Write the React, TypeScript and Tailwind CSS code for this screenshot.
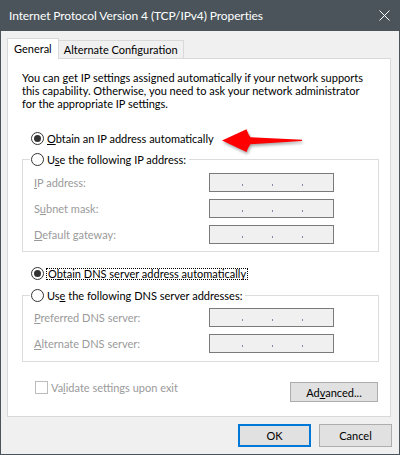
import React from "react"

function Radio({ checked }: { checked?: boolean }) {
  return (
    <span className="flex h-[13px] w-[13px] shrink-0 items-center justify-center rounded-full border border-[#333333] bg-white">
      {checked && <span className="h-[7px] w-[7px] rounded-full bg-[#333333]" />}
    </span>
  )
}

function IpBox() {
  return (
    <div className="flex h-[19px] w-[125px] items-end gap-[29px] border border-[#7a7a7a] bg-[#f0f0f0] pb-[5px] pl-[32px]">
      <span className="h-[2px] w-px bg-[#8a84a8]" />
      <span className="h-[2px] w-px bg-[#8a84a8]" />
      <span className="h-[2px] w-px bg-[#8a84a8]" />
    </div>
  )
}

function Field({ label }: { label: React.ReactNode }) {
  return (
    <div className="flex h-[19px] items-center">
      <span className="w-[175px] text-[#9a9a9a]">{label}</span>
      <IpBox />
    </div>
  )
}

export default function App() {
  return (
    <div className="flex h-[455px] w-[400px] flex-col bg-[#4a545a] font-['Lato',sans-serif] text-[11px] leading-[13px] text-black">
      {/* title bar */}
      <div className="flex h-[31px] shrink-0 items-center justify-between pl-[9px] pr-[10px] text-white">
        <span className="text-[12px] tracking-[-0.1px]">Internet Protocol Version 4 (TCP/IPv4) Properties</span>
        <svg width="11" height="11" viewBox="0 0 11 11" className="mb-px">
          <path d="M0.5 0.5 L10.5 10.5 M10.5 0.5 L0.5 10.5" stroke="#ffffff" strokeWidth="1" />
        </svg>
      </div>

      <div className="mx-px mb-px flex flex-1 flex-col bg-[#f0f0f0] pl-[6px] pt-[7px]">
        {/* tabs */}
        <div className="flex h-[20px] items-end">
          <div className="relative z-10 -mb-px flex h-[21px] items-center border-x border-t border-[#d9d9d9] bg-white px-[6px] pb-px">
            General
          </div>
          <div className="flex h-[18px] items-center border-r border-t border-[#d9d9d9] px-[5px]">
            Alternate Configuration
          </div>
        </div>

        {/* panel */}
        <div className="relative flex h-[359px] w-[384px] flex-col border border-[#d9d9d9] bg-white">
          <p className="ml-[14px] mt-[12px] whitespace-nowrap">
            You can get IP settings assigned automatically if your network supports
            <br />
            this capability. Otherwise, you need to ask your network administrator
            <br />
            for the appropriate IP settings.
          </p>

          <div className="ml-[23px] mt-[21px] flex h-[15px] items-center gap-[3px]">
            <Radio checked />
            <span>
              <u>O</u>btain an IP address automatically
            </span>
          </div>

          <svg
            width="90"
            height="34"
            viewBox="0 0 90 34"
            className="absolute left-[210px] top-[65px] drop-shadow-[1px_2px_1.5px_rgba(0,0,0,0.35)]"
          >
            <path
              d="M4 16.5 L28.5 5.3 Q30 10 32.5 13.2 L84 15.8 L84 17 L32.5 20.2 Q30 23.5 28.5 28 Z"
              fill="#ff0000"
            />
          </svg>

          <fieldset className="ml-[14px] mt-[6px] w-[357px] border border-[#dcdcdc] pb-[7px]">
            <legend className="ml-[7px] pl-px pr-[3px]">
              <div className="flex h-[15px] items-center gap-[3px]">
                <Radio />
                <span>
                  U<u>s</u>e the following IP address:
                </span>
              </div>
            </legend>
            <div className="flex flex-col gap-[7px] pl-[11px] pt-[6px]">
              <Field label={<><u>I</u>P address:</>} />
              <Field label={<>S<u>u</u>bnet mask:</>} />
              <Field label={<><u>D</u>efault gateway:</>} />
            </div>
          </fieldset>

          <div className="ml-[23px] mt-[14px] flex h-[15px] items-center gap-[2px]">
            <Radio checked />
            <span className="border border-dotted border-black px-px leading-[10px]">
              O<u>b</u>tain DNS server address automatically
            </span>
          </div>

          <fieldset className="ml-[14px] mt-[7px] w-[357px] border border-[#dcdcdc] pb-[8px]">
            <legend className="ml-[7px] pl-px pr-[3px]">
              <div className="flex h-[15px] items-center gap-[3px]">
                <Radio />
                <span>
                  Us<u>e</u> the following DNS server addresses:
                </span>
              </div>
            </legend>
            <div className="flex flex-col gap-[7px] pl-[11px] pt-[5px]">
              <Field label={<><u>P</u>referred DNS server:</>} />
              <Field label={<><u>A</u>lternate DNS server:</>} />
            </div>
          </fieldset>

          <div className="ml-[27px] mr-[12px] mt-[19px] flex items-start justify-between">
            <div className="flex items-center gap-[3px] text-[#9a9a9a]">
              <span className="h-[13px] w-[13px] border border-[#bcbcbc] bg-white" />
              <span>
                Va<u>l</u>idate settings upon exit
              </span>
            </div>
            <button className="mt-px h-[20px] w-[88px] border border-[#adadad] bg-[#e1e1e1]">
              Ad<u>v</u>anced...
            </button>
          </div>
        </div>

        {/* dialog buttons */}
        <div className="mr-[7px] mt-[7px] flex justify-end gap-[8px]">
          <button className="h-[23px] w-[73px] border-2 border-[#0078d7] bg-[#e1e1e1]">OK</button>
          <button className="h-[23px] w-[73px] border border-[#adadad] bg-[#e1e1e1]">Cancel</button>
        </div>
      </div>
    </div>
  )
}
